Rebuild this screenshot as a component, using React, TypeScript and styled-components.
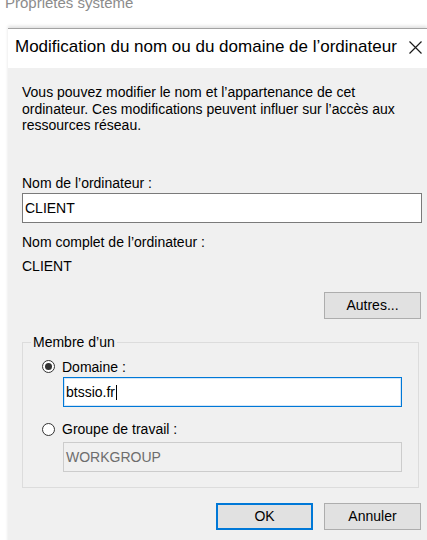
import styled, { createGlobalStyle } from "styled-components";

const GlobalStyle = createGlobalStyle`
  html, body {
    margin: 0;
    padding: 0;
    background: #ffffff;
  }
  body {
    font-family: "Liberation Sans", Arial, sans-serif;
    font-size: 14px;
    color: #000000;
  }
`;

const Screen = styled.div`
  width: 427px;
  height: 540px;
  overflow: hidden;
  background: #ffffff;
`;

/* caption of the parent window, cut off by the top edge */
const ParentCaption = styled.div`
  height: 28px;
  overflow: hidden;
  padding-left: 5px;
  font-size: 15px;
  line-height: 17px;
  color: #8c8c8c;

  span {
    display: block;
    margin-top: -6px;
  }
`;

const Dialog = styled.div`
  margin-left: 8px;
  border-top: 1px solid #a3a3a3;
  box-shadow: 0 -2px 3px rgba(0, 0, 0, 0.12);
`;

const TitleBar = styled.div`
  height: 39px;
  box-sizing: border-box;
  background: #ffffff;
  display: flex;
  align-items: flex-start;
  justify-content: space-between;
  padding: 8px 5px 0 7px;
`;

const Title = styled.div`
  font-size: 17px;
  line-height: 20px;
  color: #000000;
`;

const CloseButton = styled.div`
  width: 13px;
  height: 13px;
  margin-top: 4px;
`;

const Body = styled.div`
  background: #f0f0f0;
  height: 472px;
  padding: 16px 5px 0 14px;
  line-height: 16.5px;
`;

const Intro = styled.p`
  margin: 0;
`;

const Label = styled.div<{ $gap?: number }>`
  margin-top: ${(p) => p.$gap ?? 0}px;
`;

const TextBox = styled.div<{ $focused?: boolean; $disabled?: boolean; $indent?: number; $gap?: number }>`
  box-sizing: border-box;
  height: 30px;
  margin-top: ${(p) => p.$gap ?? 1.5}px;
  margin-left: ${(p) => p.$indent ?? 0}px;
  padding: 0 2px;
  display: flex;
  align-items: center;
  background: ${(p) => (p.$disabled ? "#f0f0f0" : "#ffffff")};
  border: 1px solid
    ${(p) => (p.$focused ? "#0078d7" : p.$disabled ? "#cccccc" : "#7a7a7a")};
  box-shadow: ${(p) => (p.$focused ? "inset 0 0 0 1px #d3e6f8" : "none")};
  color: ${(p) => (p.$disabled ? "#6d6d6d" : "#000000")};
`;

const Caret = styled.span`
  display: inline-block;
  width: 1px;
  height: 15px;
  background: #000000;
  margin-left: 1px;
`;

const ButtonRow = styled.div<{ $gap: number }>`
  display: flex;
  justify-content: flex-end;
  gap: 11px;
  margin-top: ${(p) => p.$gap}px;
  margin-right: 1px;
`;

const Button = styled.div<{ $default?: boolean }>`
  box-sizing: border-box;
  width: 97px;
  height: 27px;
  display: flex;
  align-items: center;
  justify-content: center;
  background: #e1e1e1;
  border: ${(p) => (p.$default ? "2px solid #0078d7" : "1px solid #adadad")};
  color: #000000;
`;

const GroupBox = styled.fieldset`
  margin: 15px 3px 0 0;
  padding: 8px 16px 15px 19px;
  border: 1px solid #dcdcdc;
  min-width: 0;
`;

const Legend = styled.legend`
  padding: 0 2px;
  margin-left: -11px;
  line-height: 16.5px;
`;

const RadioRow = styled.div<{ $gap?: number }>`
  display: flex;
  align-items: center;
  gap: 7px;
  margin-top: ${(p) => p.$gap ?? 0}px;
`;

const RadioCircle = styled.span<{ $checked?: boolean }>`
  box-sizing: border-box;
  flex: none;
  width: 13px;
  height: 13px;
  border-radius: 50%;
  border: 1px solid #333333;
  background: #ffffff;
  display: flex;
  align-items: center;
  justify-content: center;

  &::after {
    content: "";
    width: 7px;
    height: 7px;
    border-radius: 50%;
    background: ${(p) => (p.$checked ? "#333333" : "transparent")};
  }
`;

function CloseIcon() {
  return (
    <svg width="13" height="13" viewBox="0 0 13 13">
      <path d="M0.5 0.5 L12.5 12.5 M12.5 0.5 L0.5 12.5" stroke="#1a1a1a" strokeWidth="1.2" fill="none" />
    </svg>
  );
}

export default function App() {
  return (
    <>
      <GlobalStyle />
      <Screen>
        <ParentCaption>
          <span>Propriétés système</span>
        </ParentCaption>
        <Dialog>
          <TitleBar>
            <Title>Modification du nom ou du domaine de l’ordinateur</Title>
            <CloseButton>
              <CloseIcon />
            </CloseButton>
          </TitleBar>
          <Body>
            <Intro>
              Vous pouvez modifier le nom et l’appartenance de cet
              <br />
              ordinateur. Ces modifications peuvent influer sur l’accès aux
              <br />
              ressources réseau.
            </Intro>

            <Label $gap={41.5}>Nom de l’ordinateur :</Label>
            <TextBox>CLIENT</TextBox>

            <Label $gap={11}>Nom complet de l’ordinateur :</Label>
            <Label $gap={7.5}>CLIENT</Label>

            <ButtonRow $gap={17.5}>
              <Button>Autres...</Button>
            </ButtonRow>

            <GroupBox>
              <Legend>Membre d’un</Legend>
              <RadioRow>
                <RadioCircle $checked />
                <span>Domaine :</span>
              </RadioRow>
              <TextBox $focused $indent={21} $gap={2}>
                btssio.fr
                <Caret />
              </TextBox>
              <RadioRow $gap={14}>
                <RadioCircle />
                <span>Groupe de travail :</span>
              </RadioRow>
              <TextBox $disabled $indent={21} $gap={4.5}>
                WORKGROUP
              </TextBox>
            </GroupBox>

            <ButtonRow $gap={15}>
              <Button $default>OK</Button>
              <Button>Annuler</Button>
            </ButtonRow>
          </Body>
        </Dialog>
      </Screen>
    </>
  );
}
